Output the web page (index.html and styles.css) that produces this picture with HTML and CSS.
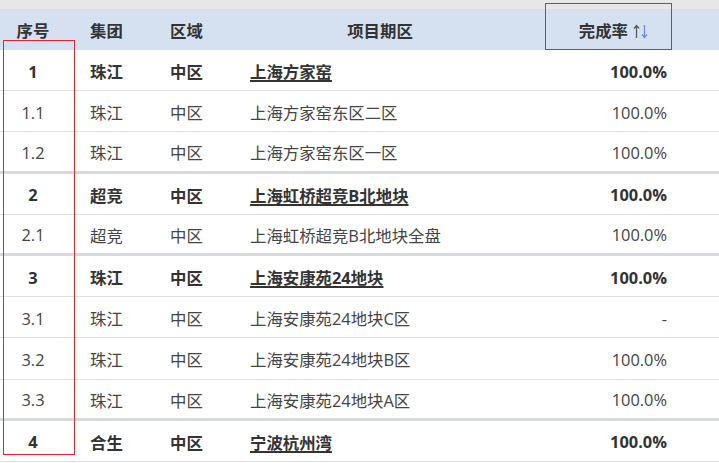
FILE: index.html
```html
<!DOCTYPE html>
<html lang="zh">
<head>
<meta charset="utf-8">
<link rel="stylesheet" href="styles.css">
</head>
<body>
<div class="topbar"></div>
<div class="table">
  <div class="row head">
    <div class="c c1">序号</div>
    <div class="c c2">集团</div>
    <div class="c c3">区域</div>
    <div class="c c4 center">项目期区</div>
    <div class="c c5 rate-head">完成率<svg class="sort" width="16" height="15" viewBox="0 0 16 15"><path d="M3.5 14V1.5M1 4.5L3.5 1.5L6 4.5" fill="none" stroke="#5a5a5a" stroke-width="1.3"/><path d="M11.5 1V13.5M9 10.5L11.5 13.5L14 10.5" fill="none" stroke="#6f88e0" stroke-width="1.3"/></svg></div>
  </div>
  <div class="row grp"><div class="c c1">1</div><div class="c c2">珠江</div><div class="c c3">中区</div><div class="c c4"><span class="link">上海方家窑</span></div><div class="c c5">100.0%</div></div>
  <div class="row"><div class="c c1">1.1</div><div class="c c2">珠江</div><div class="c c3">中区</div><div class="c c4">上海方家窑东区二区</div><div class="c c5">100.0%</div></div>
  <div class="row end"><div class="c c1">1.2</div><div class="c c2">珠江</div><div class="c c3">中区</div><div class="c c4">上海方家窑东区一区</div><div class="c c5">100.0%</div></div>
  <div class="row grp"><div class="c c1">2</div><div class="c c2">超竞</div><div class="c c3">中区</div><div class="c c4"><span class="link">上海虹桥超竞B北地块</span></div><div class="c c5">100.0%</div></div>
  <div class="row end"><div class="c c1">2.1</div><div class="c c2">超竞</div><div class="c c3">中区</div><div class="c c4">上海虹桥超竞B北地块全盘</div><div class="c c5">100.0%</div></div>
  <div class="row grp"><div class="c c1">3</div><div class="c c2">珠江</div><div class="c c3">中区</div><div class="c c4"><span class="link">上海安康苑24地块</span></div><div class="c c5">100.0%</div></div>
  <div class="row"><div class="c c1">3.1</div><div class="c c2">珠江</div><div class="c c3">中区</div><div class="c c4">上海安康苑24地块C区</div><div class="c c5">-</div></div>
  <div class="row"><div class="c c1">3.2</div><div class="c c2">珠江</div><div class="c c3">中区</div><div class="c c4">上海安康苑24地块B区</div><div class="c c5">100.0%</div></div>
  <div class="row end"><div class="c c1">3.3</div><div class="c c2">珠江</div><div class="c c3">中区</div><div class="c c4">上海安康苑24地块A区</div><div class="c c5">100.0%</div></div>
  <div class="row grp"><div class="c c1">4</div><div class="c c2">合生</div><div class="c c3">中区</div><div class="c c4"><span class="link">宁波杭州湾</span></div><div class="c c5">100.0%</div></div>
  <div class="mark mark-seq"></div>
  <div class="mark mark-rate"></div>
</div>
</body>
</html>
```

FILE: styles.css
```css
html, body {
  margin: 0;
  padding: 0;
  background: #ffffff;
  overflow: hidden;
}
body {
  width: 719px;
  height: 463px;
  font-family: "Open Sans", "Noto Sans CJK SC", sans-serif;
  font-size: 16.4px;
  color: #444;
}
.topbar {
  height: 9px;
  background: #e7e7e7;
}
.table {
  position: relative;
}
.row {
  display: grid;
  grid-template-columns: 80px 80px 80px 280px 1fr;
  box-sizing: border-box;
  height: 41.2px;
  padding-top: 2px;
  border-bottom: 1px solid #dcdfe4;
  align-items: center;
}
.row.end {
  border-bottom: 3px solid #d6d9df;
}
.row.head {
  height: 41px;
  padding-top: 0;
  background: #d5e1f1;
  border-bottom: none;
  font-weight: 700;
  color: #333;
}
.row.grp {
  font-weight: 700;
  color: #333;
}
.c {
  white-space: nowrap;
  padding-left: 10px;
}
.c1 {
  padding-left: 0;
  padding-right: 14px;
  text-align: center;
}
.center {
  padding-left: 0;
  text-align: center;
}
.c5 {
  padding-left: 0;
  padding-right: 52px;
  text-align: right;
}
.rate-head {
  padding-right: 70px;
}
.sort {
  margin-left: 5px;
  vertical-align: -2px;
}
.link {
  text-decoration: underline;
  text-decoration-thickness: 1.5px;
  text-underline-offset: 2px;
}
.mark {
  position: absolute;
  border: 1px solid #e3252f;
  box-sizing: border-box;
}
.mark-seq {
  left: 3px;
  top: 31px;
  width: 72px;
  height: 415px;
}
.mark-rate {
  left: 545px;
  top: -6px;
  width: 127px;
  height: 47px;
}
```
